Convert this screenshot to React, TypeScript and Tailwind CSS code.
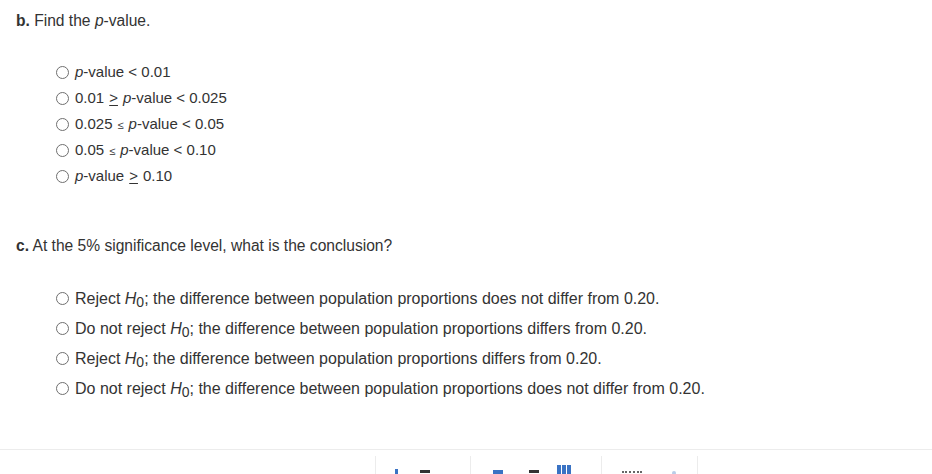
import React from "react"

function Radio() {
  return <span className="inline-block h-[13px] w-[13px] shrink-0 rounded-full border border-[#6f6f6f] bg-white" />
}

function P() {
  return <i>p</i>
}

function H0() {
  return (
    <span>
      <i>H</i>
      <span className="relative top-[3px] text-[14px]">0</span>
    </span>
  )
}

function Le() {
  return <span className="mx-[5px] text-[11px]">≤</span>
}

function Ge() {
  return <span className="mx-[5px] underline underline-offset-2">&gt;</span>
}

const pOptions: React.ReactNode[] = [
  <><P />-value &lt; 0.01</>,
  <>0.01<Ge /><P />-value &lt; 0.025</>,
  <>0.025<Le /><P />-value &lt; 0.05</>,
  <>0.05<Le /><P />-value &lt; 0.10</>,
  <><P />-value<Ge />0.10</>,
]

const conclusions: React.ReactNode[] = [
  <>Reject <H0 />; the difference between population proportions does not differ from 0.20.</>,
  <>Do not reject <H0 />; the difference between population proportions differs from 0.20.</>,
  <>Reject <H0 />; the difference between population proportions differs from 0.20.</>,
  <>Do not reject <H0 />; the difference between population proportions does not differ from 0.20.</>,
]

export default function App() {
  return (
    <div className="h-[474px] w-[932px] overflow-hidden bg-white text-[15px] text-[#333] [font-family:'Liberation_Sans',Arial,sans-serif]">
      <div className="px-4 pt-[9px]">
        <p className="text-[15.6px]">
          <b>b.</b> Find the <P />-value.
        </p>
        <div className="mt-[30px] flex flex-col gap-[6px] pl-[40px]">
          {pOptions.map((o, i) => (
            <div key={i} className="flex h-[20px] items-center gap-[6px]">
              <Radio />
              <span>{o}</span>
            </div>
          ))}
        </div>

        <p className="mt-[48px] text-[15.6px]">
          <b>c.</b> At the 5% significance level, what is the conclusion?
        </p>
        <div className="mt-[31px] flex flex-col gap-[10px] pl-[40px] text-[16px]">
          {conclusions.map((o, i) => (
            <div key={i} className="flex h-[20px] items-center gap-[6px]">
              <Radio />
              <span>{o}</span>
            </div>
          ))}
        </div>
      </div>

      <div className="mt-[50px] border-t border-[#ececec]">
        <div className="ml-[375px] mt-[6px] flex h-[20px]">
          <div className="relative w-[96px] border-x border-[#ececec]">
            <span className="absolute left-[19px] top-[13px] h-[6px] w-[3px] bg-[#3a73c4]" />
            <span className="absolute left-[44px] top-[14px] h-[3px] w-[10px] bg-[#333]" />
          </div>
          <div className="relative w-[131px] border-r border-[#ececec]">
            <span className="absolute left-[22px] top-[14px] h-[4px] w-[10px] bg-[#3a73c4]" />
            <span className="absolute left-[58px] top-[14px] h-[3px] w-[10px] bg-[#333]" />
            <span className="absolute left-[86px] top-[9px] flex gap-[1px]">
              <span className="h-[10px] w-[4px] bg-[#3a73c4]" />
              <span className="h-[10px] w-[4px] bg-[#3a73c4]" />
              <span className="h-[10px] w-[4px] bg-[#3a73c4]" />
            </span>
          </div>
          <div className="relative w-[96px] border-r border-[#ececec]">
            <span className="absolute left-[20px] top-[15px] h-[4px] w-[20px] border-t-2 border-dotted border-[#666]" />
            <span className="absolute left-[70px] top-[15px] h-[4px] w-[4px] rounded-full bg-[#b9cde8]" />
          </div>
        </div>
      </div>
    </div>
  )
}
